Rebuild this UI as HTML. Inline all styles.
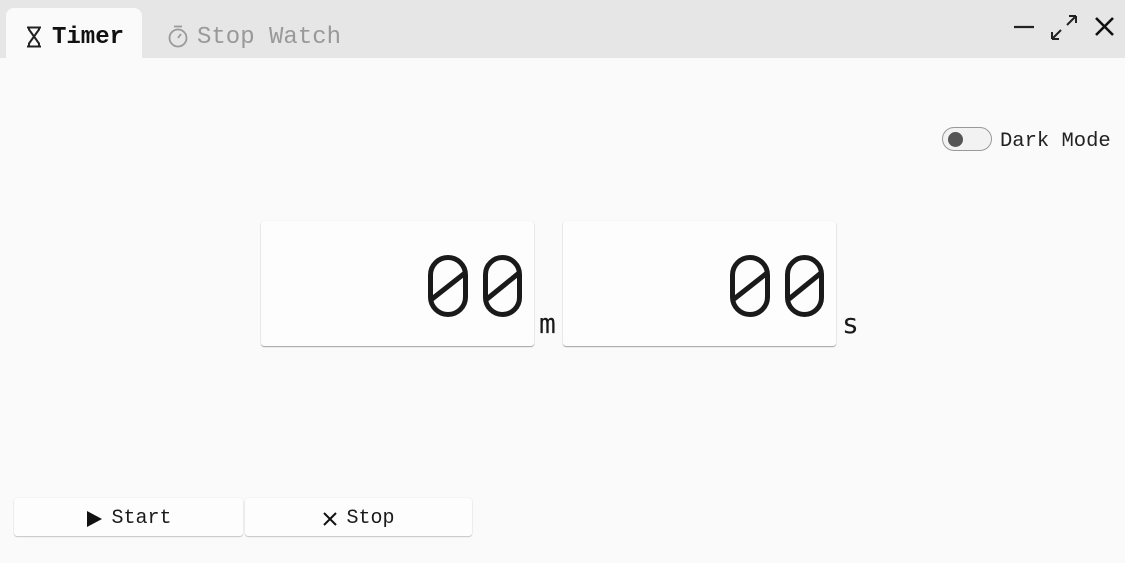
<!DOCTYPE html>
<html><head><meta charset="utf-8"><style>
*{margin:0;padding:0;box-sizing:border-box}
body{width:1125px;height:563px;background:#fafafa;font-family:"Liberation Mono","DejaVu Sans Mono",monospace;position:relative;overflow:hidden;color:#1a1a1a}
.bar{position:absolute;left:0;top:0;width:1125px;height:58px;background:#e6e6e6}
.tab{position:absolute;left:6px;top:8px;width:136px;height:51px;background:#fafafa;border-radius:8px 8px 0 0}
.t{position:absolute;font-size:24px;top:24px}
.box{position:absolute;top:221px;width:273px;height:125px;background:#fdfdfd;border-radius:3px;box-shadow:0 1px 1px rgba(0,0,0,.35),0 0 1px rgba(0,0,0,.12)}
.num{position:absolute;right:12px;top:24px;font-family:"Liberation Mono",monospace;font-size:84px;line-height:84px;letter-spacing:-3px;color:transparent}
.sl{position:absolute;left:0;top:0}
.unit{position:absolute;top:307px;font-size:28px;font-family:"DejaVu Sans Mono",monospace}
.btn{position:absolute;top:498px;height:38px;background:#fdfdfd;border-radius:3px;box-shadow:0 1px 1px rgba(0,0,0,.2),0 0 1px rgba(0,0,0,.15);font-size:20px;display:flex;align-items:center;justify-content:center;gap:8px;padding-top:3px}
</style></head><body>
<div class="bar"></div>
<div class="tab"></div>
<svg style="position:absolute;left:25px;top:26px" width="18" height="22" viewBox="0 0 18 22"><path d="M2 1.5h14M2 20.5h14M4 1.5v2l10 14v3M14 1.5v2l-10 14v3" fill="none" stroke="#222" stroke-width="2"/></svg>
<div class="t" style="left:52px;font-weight:bold;color:#111">Timer</div>
<svg style="position:absolute;left:167px;top:24px" width="22" height="24" viewBox="0 0 22 24"><circle cx="11" cy="14" r="8.5" fill="none" stroke="#999" stroke-width="1.8"/><path d="M7 2.5h8M11 14l3-4" stroke="#999" stroke-width="1.8" fill="none"/></svg>
<div class="t" style="left:197px;color:#999">Stop Watch</div>
<svg style="position:absolute;left:1012px;top:14px" width="106" height="30" viewBox="0 0 106 30"><path d="M2 13h20" stroke="#222" stroke-width="2.2"/><path d="M40 25l9-9M40 25v-7M40 25h7M64 2l-9 9M64 2v7M64 2h-7" stroke="#222" stroke-width="2" fill="none"/><path d="M84 4l17 17M101 4L84 21" stroke="#111" stroke-width="2.6"/></svg>
<div style="position:absolute;left:942px;top:127px;width:50px;height:24px;border:1.5px solid #999;border-radius:12px;background:#f2f2f2"></div>
<div style="position:absolute;left:948px;top:132px;width:15px;height:15px;border-radius:50%;background:#555"></div>
<div style="position:absolute;left:1000px;top:130px;font-size:20.5px;color:#222">Dark Mode</div>
<div class="box" style="left:261px"><div class="num">00</div><svg class="sl" width="273" height="125"><g fill="none" stroke="#1a1a1a" stroke-width="5"><rect x="169.5" y="36.5" width="35" height="57" rx="17.5"/><rect x="224.5" y="36.5" width="34" height="57" rx="17"/><path d="M171 78L204 52M226 78L258 52"/></g></svg></div>
<div class="unit" style="left:539px">m</div>
<div class="box" style="left:563px"><div class="num">00</div><svg class="sl" width="273" height="125"><g fill="none" stroke="#1a1a1a" stroke-width="5"><rect x="169.5" y="36.5" width="35" height="57" rx="17.5"/><rect x="224.5" y="36.5" width="34" height="57" rx="17"/><path d="M171 78L204 52M226 78L258 52"/></g></svg></div>
<div class="unit" style="left:842px">s</div>
<div class="btn" style="left:14px;width:229px"><svg width="18" height="18" viewBox="0 0 18 18"><path d="M2 1l15 8l-15 8z" fill="#111"/></svg><span>Start</span></div>
<div class="btn" style="left:245px;width:227px"><svg width="16" height="16" viewBox="0 0 16 16"><path d="M2 2l12 12M14 2L2 14" stroke="#111" stroke-width="2"/></svg><span>Stop</span></div>
</body></html>
